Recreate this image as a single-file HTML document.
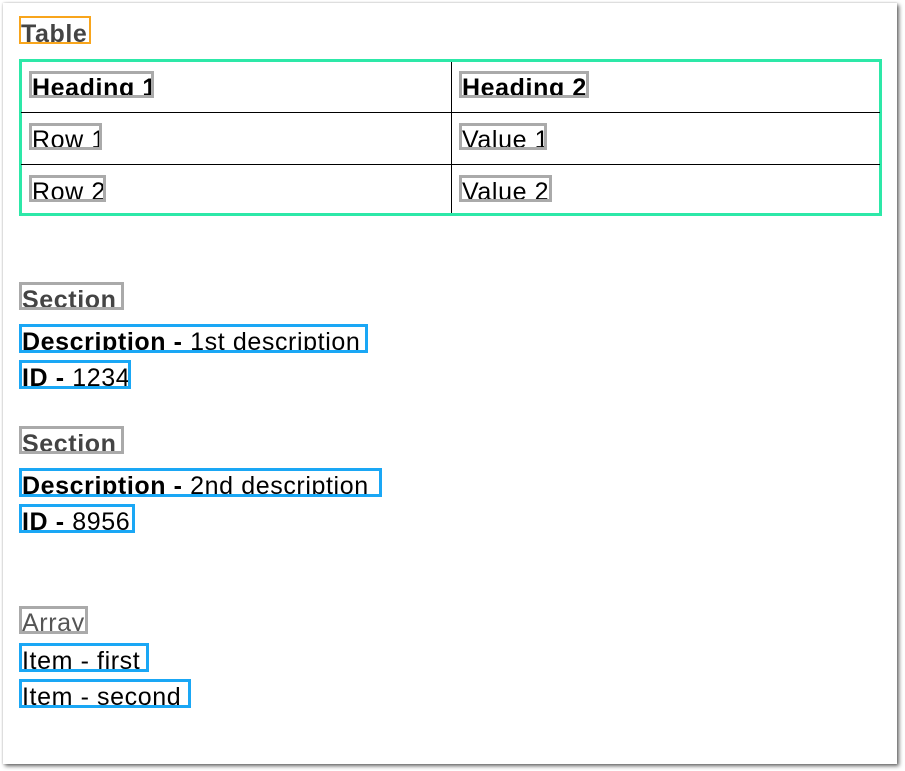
<!DOCTYPE html>
<html><head><meta charset="utf-8"><style>
body{margin:0;background:#fff;width:905px;height:771px;position:relative;overflow:hidden;font-family:"Liberation Sans",sans-serif;color:#000}
.card{position:absolute;left:3px;top:3px;width:894px;height:761px;background:#fff;box-shadow:2px 2px 4px rgba(0,0,0,.6),0 0 2px rgba(0,0,0,.2)}
.b{position:absolute;box-sizing:border-box;font-size:25px;line-height:30px;letter-spacing:0.6px;white-space:nowrap;overflow:hidden}
.o{border:2px solid #f8a51c;color:#444;font-weight:bold}
.g{border:3px solid #aaa;line-height:28px}
.s{border:3px solid #aaa;color:#444;font-weight:bold;line-height:30px}
.c{border:3px solid #1aa7f5;line-height:30px}
.t{position:absolute;left:19px;top:59px;width:863px;height:157px;box-sizing:border-box;border:3px solid #2de8a8}
.hl{position:absolute;left:21px;width:859px;height:1px;background:#000}
.vl{position:absolute;left:451px;top:62px;width:1px;height:151px;background:#000}
</style></head><body>
<div class="card"></div>
<div class="b o" style="left:19px;top:16px;width:72px;height:28px;line-height:32px">Table</div>
<div class="t"></div>
<div class="hl" style="top:112px"></div>
<div class="hl" style="top:164px"></div>
<div class="vl"></div>
<div class="b g" style="left:29px;top:71px;width:125px;height:27px;font-weight:bold">Heading 1</div>
<div class="b g" style="left:459px;top:71px;width:130px;height:27px;font-weight:bold">Heading 2</div>
<div class="b g" style="left:29px;top:123px;width:73px;height:27px">Row 1</div>
<div class="b g" style="left:459px;top:123px;width:88px;height:27px">Value 1</div>
<div class="b g" style="left:29px;top:175px;width:77px;height:27px">Row 2</div>
<div class="b g" style="left:459px;top:175px;width:93px;height:27px">Value 2</div>

<div class="b s" style="left:19px;top:282px;width:105px;height:28px">Section</div>
<div class="b c" style="left:19px;top:324px;width:349px;height:29px"><b>Description - </b>1st description</div>
<div class="b c" style="left:19px;top:360px;width:112px;height:29px"><b>ID - </b>1234</div>
<div class="b s" style="left:19px;top:426px;width:105px;height:28px">Section</div>
<div class="b c" style="left:19px;top:468px;width:363px;height:29px"><b>Description - </b>2nd description</div>
<div class="b c" style="left:19px;top:504px;width:116px;height:29px"><b>ID - </b>8956</div>

<div class="b g" style="left:19px;top:606px;width:69px;height:28px;color:#555">Array</div>
<div class="b c" style="left:19px;top:643px;width:130px;height:29px">Item - first</div>
<div class="b c" style="left:19px;top:679px;width:172px;height:29px">Item - second</div>
</body></html>
